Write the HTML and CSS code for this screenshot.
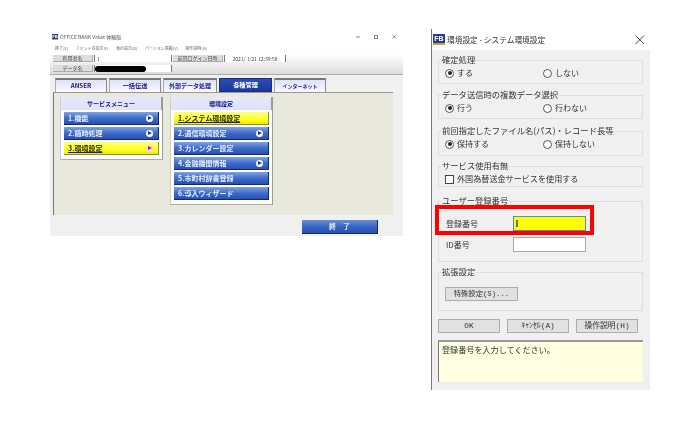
FILE: index.html
```html
<!DOCTYPE html>
<html lang="ja">
<head>
<meta charset="utf-8">
<title>OFFICE BANK Value</title>
<link rel="stylesheet" href="styles.css">
</head>
<body>
<section class="win main">
  <div class="titlebar">
    <span class="logo small">FB</span><span class="title">OFFICE BANK Value 体験版</span>
    <span class="controls">
      <svg width="50" height="8" viewBox="0 0 50 8"><path d="M6 4h4" stroke="#888" fill="none"/><rect x="24.500" y="2.500" width="3" height="3" stroke="#888" fill="none"/><path d="M42.500 2l3.500 3.500m0-3.500l-3.500 3.500" stroke="#888" fill="none"/></svg>
    </span>
  </div>
  <nav class="menu"><span>終了(X)</span><span>フォントの指定(F)</span><span>表示設定(D)</span><span>バージョン情報(V)</span><span>操作説明(H)</span></nav>
  <header class="infobar">
    <div class="inforow">
      <span class="chip">利用者名</span><span class="field wide">1</span>
      <span class="chip chip-login">前回ログイン日時</span><span class="field date">2021/ 1/21 12:39:58</span>
    </div>
    <div class="inforow">
      <span class="chip">データ名</span><span class="field wide"><i class="mask"></i></span>
    </div>
  </header>
  <div class="tabs">
    <span class="tab">ANSER</span><span class="tab">一括伝送</span><span class="tab ext">外部データ処理</span><span class="tab active">各種管理</span><span class="tab net">インターネット</span>
  </div>
  <div class="panel">
    <div class="card">
      <h2>サービスメニュー</h2>
      <a class="btn"><b>1.機能</b><i class="arrow"></i></a>
      <a class="btn"><b>2.随時処理</b><i class="arrow"></i></a>
      <a class="btn on"><b>3.環境設定</b><i class="arrow red"></i></a>
    </div>
    <div class="card">
      <h2>環境設定</h2>
      <a class="btn on plain"><b>1.システム環境設定</b></a>
      <a class="btn"><b>2.通信環境設定</b><i class="arrow"></i></a>
      <a class="btn"><b>3.カレンダー設定</b></a>
      <a class="btn"><b>4.金融機関情報</b><i class="arrow"></i></a>
      <a class="btn"><b>5.市町村辞書登録</b></a>
      <a class="btn"><b>6.導入ウィザード</b></a>
    </div>
  </div>
  <div class="foot"><a class="end">終　了</a></div>
</section>

<section class="win dialog">
  <div class="dtitle">
    <span class="logo">FB</span><span class="dtext">環境設定 - システム環境設定</span>
    <svg class="close" width="10" height="10" viewBox="0 0 10 10"><path d="M.5.500l8.500 8.500m0-8.500l-8.500 8.500" stroke="#444" fill="none"/></svg>
  </div>
  <fieldset class="group g1"><legend>確定処理</legend>
    <div class="radios"><label><i class="radio sel"></i>する</label><label><i class="radio"></i>しない</label></div>
  </fieldset>
  <fieldset class="group g2"><legend>データ送信時の複数データ選択</legend>
    <div class="radios"><label><i class="radio sel"></i>行う</label><label><i class="radio"></i>行わない</label></div>
  </fieldset>
  <fieldset class="group g3"><legend>前回指定したファイル名(パス)・レコード長等</legend>
    <div class="radios"><label><i class="radio sel"></i>保持する</label><label><i class="radio"></i>保持しない</label></div>
  </fieldset>
  <fieldset class="group g4"><legend>サービス使用有無</legend>
    <label class="check"><i class="box"></i>外国為替送金サービスを使用する</label>
  </fieldset>
  <fieldset class="group g5"><legend>ユーザー登録番号</legend>
    <div class="formrow first"><span class="flabel">登録番号</span><span class="input yellow"><i class="caret"></i></span></div>
    <div class="formrow"><span class="flabel">ID番号</span><span class="input"></span></div>
    <div class="highlight"></div>
  </fieldset>
  <fieldset class="group g6"><legend>拡張設定</legend>
    <span class="wbtn special">特殊設定(S)...</span>
  </fieldset>
  <div class="actions"><span class="wbtn">OK</span><span class="wbtn">ｷｬﾝｾﾙ(A)</span><span class="wbtn">操作説明(H)</span></div>
  <div class="message">登録番号を入力してください。</div>
</section>
</body>
</html>
```
FILE: styles.css
```css
* { box-sizing: border-box; }
html, body { margin: 0; padding: 0; }
body {
  width: 700px; height: 421px; background: #fff; overflow: hidden; position: relative;
  font-family: "Noto Sans CJK JP", "Liberation Sans", sans-serif; color: #333;
}
i { display: block; font-style: normal; }

.win { position: absolute; background: #f0f0f0; filter: blur(.35px); }

/* main window */
.main { left: 50px; top: 31px; width: 353px; height: 205px; display: flex; flex-direction: column; }
.titlebar { height: 11px; background: #fff; display: flex; align-items: center; padding: 0 0 0 2px; gap: 2px; font-size: 5px; color: #555; }
.logo { background: #1f3f8f; color: #fff; font: bold 7px/9px "Liberation Sans", sans-serif; width: 12px; height: 11px; text-align: center; border-bottom: 2px solid #c9a23a; flex: none; }
.logo.small { width: 6px; height: 6px; font-size: 4px; line-height: 5px; border-bottom-width: 1px; }
.controls { margin-left: auto; margin-right: 3px; display: flex; width: 50px; }
.menu { height: 12px; background: #fff; display: flex; align-items: center; font-size: 4px; color: #666; padding-left: 5px; gap: 7.500px; }
.infobar { height: 21px; background: linear-gradient(#fff, #dcdcdc); border-bottom: 1px solid #aaa; padding-top: 1px; display: flex; flex-direction: column; gap: 3px; }
.inforow { display: flex; height: 7px; padding-left: 3px; align-items: stretch; }
.chip { width: 40px; background: #ddd; border-bottom: 1px solid #aaa; border-right: 1px solid #aaa; font-size: 5px; line-height: 6px; text-align: center; color: #444; flex: none; }
.field { background: #fff; border-left: 1px solid #777; border-right: 1px solid #777; font-size: 5px; line-height: 7px; padding-left: 2px; color: #444; display: flex; align-items: center; flex: none; }
.wide { width: 78px; margin-left: 1px; }
.chip-login { width: 50px; margin-left: 1px; }
.date { width: 62px; margin-left: 1px; justify-content: center; padding: 0; }
.mask { width: 51px; height: 6px; border-radius: 3px; background: #000; margin-left: -2px; }

.tabs { display: flex; gap: 2px; margin: 3px 0 0 5px; height: 14px; }
.tab { width: 52px; background: linear-gradient(#dfe3f7, #f8f8ff); border-top: 2px solid #777; border-left: 1px solid #aaa; border-right: 1px solid #888; font-size: 6.200px; line-height: 12px; font-weight: 700; text-align: center; color: #15158a; }
.tab.active { background: linear-gradient(#2c4fb0, #1a38a0); color: #fff; border: 1px solid #1a2f80; width: 53px; line-height: 12px; }
.tab.ext { width: 54px; font-size: 6px; }
.tab.net { font-size: 5px; }
.panel { margin-left: 3px; width: 340px; height: 123px; background: #e8e8dd; border-top: 1px solid #999; border-left: 1px solid #777; padding: 4px 0 0 6px; display: flex; gap: 7px; align-items: flex-start; }
.card { width: 103px; background: #fff; border: 1px solid #ccc; border-top: 0; border-right-color: #999; border-bottom-color: #aaa; padding: 0 3px 4px 3px; display: flex; flex-direction: column; gap: 2px; }
.card h2 { margin: 0 -3px; height: 13px; background: linear-gradient(#e6e8fb, #dfe2f8); font-size: 6px; line-height: 13px; font-weight: 700; text-align: center; color: #14148a; border-right: 1px solid #999; }
.btn { height: 13px; display: flex; align-items: center; justify-content: space-between; padding: 0 5px 0 4px; background: linear-gradient(#7fa3e0, #3e6ccb 50%, #2a50b0); border-right: 1px solid #13276e; border-bottom: 1px solid #13276e; color: #e8eeff; font-size: 7px; }
.btn b { font-weight: 700; }
.btn.on { background: linear-gradient(#ffff88, #ffff22 60%, #eeee00); border-color: #8b8b40; color: #222; }
.btn.on b { text-decoration: underline; }
.arrow { width: 7px; height: 7px; border-radius: 50%; background: #fff; position: relative; }
.arrow::after { content: ""; position: absolute; left: 2px; top: 1px; border-left: 4px solid #1a2ee0; border-top: 2.500px solid transparent; border-bottom: 2.500px solid transparent; }
.arrow.red { background: #ffe0e0; }
.arrow.red::after { border-left-color: #e81020; }
.foot { display: flex; justify-content: flex-end; padding: 5px 25px 0 0; }
.end { width: 76px; height: 14px; background: linear-gradient(#6b90d8, #3a66c4 50%, #2650b0); border-right: 1px solid #13276e; border-bottom: 1px solid #13276e; color: #e8eeff; font-size: 7px; font-weight: 700; line-height: 13px; text-align: center; }

/* dialog */
.dialog { left: 431px; top: 29px; width: 219px; height: 361px; border-left: 1px solid #778; padding: 0 6px 0 6px; display: flex; flex-direction: column; }
.dtitle { height: 21px; margin: 0 -6px; padding: 0 5px 0 1px; background: #fff; display: flex; align-items: center; gap: 2px; font-size: 7.700px; color: #333; flex: none; }
.dtext { flex: 1; }
.close { flex: none; }
.group { margin: 0; padding: 0 0 0 6px; border: 1px solid #dedede; position: relative; min-width: 0; display: block; width: 205px; flex: none; }
.group legend { padding: 0 0 3px; margin-left: -3px; font-size: 8.300px; line-height: 10px; color: #333; }
.g1 { height: 30px; margin-top: 4px; }
.g2 { height: 30px; margin-top: 5px; }
.g3 { height: 31px; margin-top: 6px; }
.g4 { height: 27px; margin-top: 4px; }
.g5 { height: 67px; margin-top: 8px; }
.g6 { height: 45px; margin-top: 4px; }
.radios { display: flex; font-size: 8px; line-height: 12px; }
.radios label { width: 98px; display: flex; align-items: center; gap: 3px; }
.radio { width: 9px; height: 9px; border-radius: 50%; border: 1px solid #555; background: #fff; position: relative; }
.radio.sel::after { content: ""; position: absolute; left: 1.500px; top: 1.500px; width: 4px; height: 4px; background: #222; border-radius: 50%; }
.check { display: flex; align-items: center; gap: 3px; font-size: 8.100px; line-height: 12px; }
.box { width: 9px; height: 9px; border: 1px solid #444; background: #fff; }
.formrow { display: flex; align-items: center; height: 15px; margin-top: 6px; }
.formrow.first { margin-top: 8px; }
.flabel { width: 68px; font-size: 8px; padding-left: 1px; }
.input { width: 73px; height: 15px; background: #fff; border: 1px solid #aaa; display: block; }
.yellow { background: #ff0; border: 1px solid #4a90d8; padding: 3px 0 0 2px; }
.caret { width: 2px; height: 7px; background: #777; }
.highlight { position: absolute; left: -4px; top: -3px; width: 159px; height: 30px; border: 4px solid #f00; }
.wbtn { display: block; background: #e1e1e1; border: 1px solid #adadad; font: 7.300px/12px "Liberation Mono", "Noto Sans CJK JP", monospace; text-align: center; color: #333; }
.special { width: 73px; height: 14px; margin-top: 8px; }
.actions { display: flex; margin: 8px 0 0 0; width: 200px; justify-content: space-between; flex: none; }
.actions .wbtn { width: 62px; height: 14px; font-size: 7.800px; }
.message { width: 205px; height: 42px; margin-top: 7px; background: #ffffe1; border-top: 2px solid #999; border-left: 1px solid #777; font-size: 8.100px; line-height: 12px; padding: 2px 3px; color: #333; flex: none; }
```
